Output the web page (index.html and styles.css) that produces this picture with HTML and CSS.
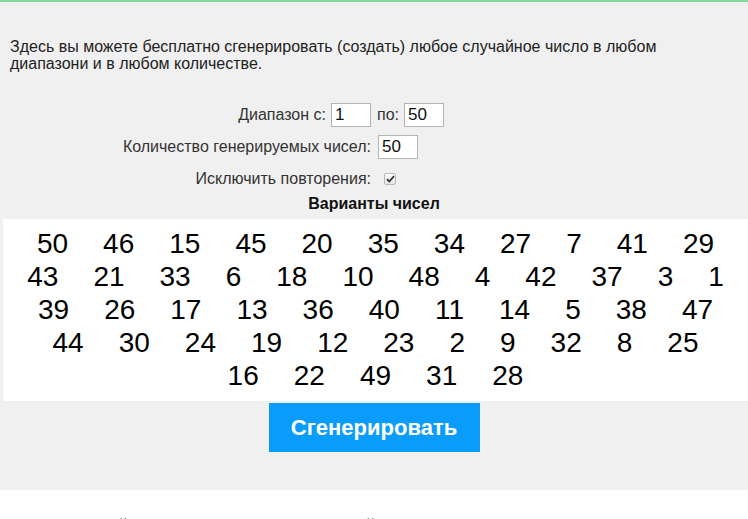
FILE: index.html
```html
<!DOCTYPE html>
<html lang="ru">
<head>
<meta charset="utf-8">
<title>Генератор случайных чисел</title>
<link rel="stylesheet" href="styles.css">
</head>
<body>
<div class="panel">
  <p class="intro">Здесь вы можете бесплатно сгенерировать (создать) любое случайное число в любом диапазони и в любом количестве.</p>
  <div class="form">
    <div class="cell left">Диапазон с: <input class="field" type="text" value="1"></div>
    <div class="cell right">по: <input class="field gap" type="text" value="50"></div>
    <div class="cell left">Количество генерируемых чисел:</div>
    <div class="cell right"><input class="field" type="text" value="50"></div>
    <div class="cell left">Исключить повторения:</div>
    <div class="cell right"><span class="check"><svg width="9" height="8" viewBox="0 0 9 8"><path d="M1 4.2 L3.3 6.5 L8 1.2" fill="none" stroke="#333" stroke-width="1.8"/></svg></span></div>
  </div>
  <div class="title">Варианты чисел</div>
  <div class="numbers">
    <span>50</span><span>46</span><span>15</span><span>45</span><span>20</span><span>35</span><span>34</span><span>27</span><span>7</span><span>41</span><span>29</span>
    <span>43</span><span>21</span><span>33</span><span>6</span><span>18</span><span>10</span><span>48</span><span>4</span><span>42</span><span>37</span><span>3</span><span>1</span>
    <span>39</span><span>26</span><span>17</span><span>13</span><span>36</span><span>40</span><span>11</span><span>14</span><span>5</span><span>38</span><span>47</span>
    <span>44</span><span>30</span><span>24</span><span>19</span><span>12</span><span>23</span><span>2</span><span>9</span><span>32</span><span>8</span><span>25</span>
    <span>16</span><span>22</span><span>49</span><span>31</span><span>28</span>
  </div>
  <div class="actions"><button class="btn" type="button">Сгенерировать</button></div>
</div>
<p class="next">Представленный генератор целых чисел, который не повторяет значения и может создать список из чисел.</p>
</body>
</html>
```
FILE: styles.css
```css
html, body {
  margin: 0;
  padding: 0;
  background: #fff;
  font-family: "Liberation Sans", Arial, sans-serif;
  color: #222;
}
.panel {
  border-top: 2px solid #86d99a;
  background: #f0f0f0;
  padding: 0 0 38px 0;
}
.intro {
  margin: 0;
  padding: 36px 10px 0 10px;
  font-size: 16px;
  line-height: 17px;
  color: #222;
}
.form {
  display: grid;
  grid-template-columns: 1fr 1fr;
  column-gap: 6px;
  margin-top: 31px;
  font-size: 16px;
  color: #333;
}
.cell {
  display: flex;
  align-items: center;
  height: 24px;
  margin-bottom: 8px;
  white-space: nowrap;
}
.cell.left { justify-content: flex-end; }
.cell.right { justify-content: flex-start; }
.field {
  box-sizing: border-box;
  width: 40px;
  height: 24px;
  margin-left: 5px;
  padding: 1px 3px;
  border: 1px solid #b4b4b4;
  background: #fff;
  font-family: "Liberation Sans", Arial, sans-serif;
  font-size: 17px;
  color: #111;
  outline: none;
}
.cell.right > .field:first-child { margin-left: 1px; }
.cell.right > .field.gap { margin-left: 5px; }
.check {
  display: inline-flex;
  align-items: center;
  justify-content: center;
  box-sizing: border-box;
  width: 12px;
  height: 12px;
  margin-left: 7px;
  border: 1px solid #b9b9b9;
  border-radius: 2px;
  background: linear-gradient(#fbfbfb, #e4e4e4);
}
.title {
  margin-top: -4px;
  text-align: center;
  font-weight: bold;
  font-size: 16px;
  color: #111;
  line-height: 18px;
}
.numbers {
  margin: 6px 0 0 3px;
  padding: 8px 0 9px 0;
  background: #fff;
  text-align: center;
  font-size: 28px;
  line-height: 33px;
  color: #000;
}
.numbers span {
  display: inline-block;
  margin: 0 17.5px;
}
.actions {
  display: flex;
  justify-content: center;
  margin-top: 2px;
}
.btn {
  width: 211px;
  height: 49px;
  border: none;
  background: #0a9cfb;
  color: #fff;
  font-family: "Liberation Sans", Arial, sans-serif;
  font-weight: bold;
  font-size: 22px;
  cursor: pointer;
}
.next {
  margin: 27px 0 0 0;
  padding: 0 1px;
  font-size: 16px;
  line-height: 17px;
  color: #000;
}
```
